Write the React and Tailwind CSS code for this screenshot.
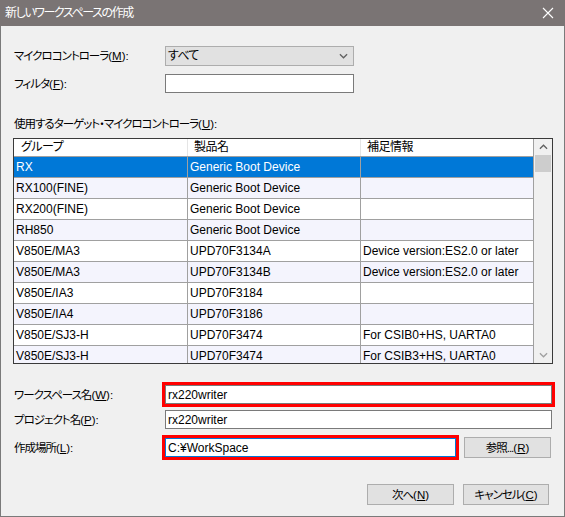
import React from "react";

const rows = [
  ["RX", "Generic Boot Device", ""],
  ["RX100(FINE)", "Generic Boot Device", ""],
  ["RX200(FINE)", "Generic Boot Device", ""],
  ["RH850", "Generic Boot Device", ""],
  ["V850E/MA3", "UPD70F3134A", "Device version:ES2.0 or later"],
  ["V850E/MA3", "UPD70F3134B", "Device version:ES2.0 or later"],
  ["V850E/IA3", "UPD70F3184", ""],
  ["V850E/IA4", "UPD70F3186", ""],
  ["V850E/SJ3-H", "UPD70F3474", "For CSIB0+HS, UARTA0"],
  ["V850E/SJ3-H", "UPD70F3474", "For CSIB3+HS, UARTA0"],
];

const Chevron = ({ up, className }) => (
  <svg viewBox="0 0 10 6" className={className} fill="none" stroke="currentColor" strokeWidth="1.4">
    <path d={up ? "M1 5l4-4 4 4" : "M1 1l4 4 4-4"} />
  </svg>
);

// narrow Japanese UI label, mnemonic letter underlined
const Label = ({ text, k, tail = "):" }) => (
  <span className="text-[11.5px]">
    <span className="tracking-[-1px]">{text}</span>(<u>{k}</u>{tail}
  </span>
);

export default function App() {
  return (
    <div className="w-[565px] h-[517px] flex flex-col bg-[#f0f0f0] text-[12px] text-black font-['Liberation_Sans','Noto_Sans_CJK_JP',sans-serif] [font-feature-settings:'palt'] overflow-hidden">
      {/* Title bar */}
      <div className="h-[26px] shrink-0 bg-[#7a7474] flex items-center justify-between pl-[5px] pr-[11px] text-white">
        <span className="text-[12px] tracking-[-1.4px]">新しいワークスペースの作成</span>
        <svg viewBox="0 0 12 12" className="w-[12px] h-[12px]" stroke="currentColor" strokeWidth="1.1">
          <path d="M1 1l10 10M11 1L1 11" />
        </svg>
      </div>

      <div className="flex-1 flex flex-col border-x border-b border-[#7a7a7a] pl-[12px] pr-[11px] leading-[16px]">
        {/* Microcontroller */}
        <div className="mt-[20px] flex items-center">
          <div className="w-[152px] pl-[1px]">
            <Label text="マイクロコントローラ" k="M" />
          </div>
          <div className="w-[189px] h-[20px] bg-[#e1e1e1] border border-[#adadad] flex items-center justify-between pl-[2px] pr-[5px]">
            <span className="tracking-[-0.8px]">すべて</span>
            <Chevron className="w-[9px] h-[6px] text-[#606060]" />
          </div>
        </div>

        {/* Filter */}
        <div className="mt-[8px] flex items-center">
          <div className="w-[152px] pl-[1px]">
            <Label text="フィルタ" k="F" />
          </div>
          <div className="w-[189px] h-[19px] bg-white border border-[#7a7a7a]" />
        </div>

        <div className="mt-[23px] pl-[1px]">
          <Label text="使用するターゲット・マイクロコントローラ" k="U" />
        </div>

        {/* Table */}
        <div className="mt-[6px] w-[540px] h-[226px] border border-[#3a3a3a] bg-white flex">
          <div className="w-[520px] flex flex-col overflow-hidden">
            <div className="h-[18px] shrink-0 grid grid-cols-[174px_173px_173px] border-b border-[#a0a0a0] tracking-[-0.5px]">
              <div className="border-r border-[#e5e5e5] pl-[7px]">グループ</div>
              <div className="border-r border-[#e5e5e5] pl-[6px]">製品名</div>
              <div className="border-r border-[#a0a0a0] pl-[6px]">補足情報</div>
            </div>
            {rows.map((r, i) => (
              <div
                key={i}
                className={`h-[21px] shrink-0 grid grid-cols-[174px_173px_173px] border-b border-[#a0a0a0] items-center ${
                  i === 0 ? "bg-[#0078d7] text-white" : i % 2 === 1 ? "bg-[#f4f4fd]" : "bg-white"
                }`}
              >
                {r.map((c, j) => (
                  <div key={j} className="h-full flex items-center border-r border-[#a0a0a0] pl-[2px] whitespace-nowrap">
                    {c}
                  </div>
                ))}
              </div>
            ))}
          </div>
          {/* Scrollbar */}
          <div className="w-[18px] bg-[#f0f0f0] flex flex-col">
            <div className="h-[16px] flex items-center justify-center">
              <Chevron up className="w-[9px] h-[6px] text-[#606060]" />
            </div>
            <div className="h-[17px] mx-[1px] bg-[#cdcdcd]" />
            <div className="flex-1" />
            <div className="h-[17px] flex items-center justify-center">
              <Chevron className="w-[9px] h-[6px] text-[#a0a0a0]" />
            </div>
          </div>
        </div>

        {/* Workspace name */}
        <div className="mt-[21px] flex items-center">
          <div className="w-[152px] pl-[1px]">
            <Label text="ワークスペース名" k="W" />
          </div>
          <div className="w-[387px] h-[19px] bg-white border border-[#7a7a7a] outline-[3px] outline-solid outline-[#ff0000] flex items-center pl-[2px]">
            rx220writer
          </div>
        </div>

        {/* Project name */}
        <div className="mt-[6px] flex items-center">
          <div className="w-[152px] pl-[1px]">
            <Label text="プロジェクト名" k="P" />
          </div>
          <div className="w-[387px] h-[19px] bg-white border border-[#7a7a7a] flex items-center pl-[2px]">
            rx220writer
          </div>
        </div>

        {/* Location */}
        <div className="mt-[8px] flex items-center">
          <div className="w-[152px] pl-[1px]">
            <Label text="作成場所" k="L" />
          </div>
          <div className="w-[291px] h-[19px] bg-white border border-[#0078d7] outline-[3px] outline-solid outline-[#ff0000] flex items-center pl-[2px]">
            C:¥WorkSpace
          </div>
          <button className="ml-[8px] w-[87px] h-[21px] bg-[#e1e1e1] border border-[#adadad] flex items-center justify-center">
            <Label text="参照..." k="R" tail=")" />
          </button>
        </div>

        {/* Footer buttons */}
        <div className="mt-[26px] flex justify-end gap-[9px] pr-[4px]">
          <button className="w-[87px] h-[21px] bg-[#e1e1e1] border border-[#adadad] flex items-center justify-center">
            <Label text="次へ" k="N" tail=")" />
          </button>
          <button className="w-[86px] h-[21px] bg-[#e1e1e1] border border-[#adadad] flex items-center justify-center">
            <Label text="キャンセル" k="C" tail=")" />
          </button>
        </div>
      </div>
    </div>
  );
}
